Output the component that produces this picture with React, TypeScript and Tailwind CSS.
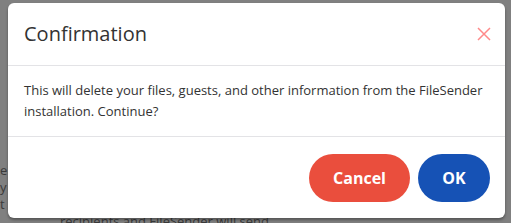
export default function App() {
  return (
    <div className="relative w-[511px] h-[223px] overflow-hidden bg-[#808080] font-['Open_Sans',sans-serif]">
      {/* page content behind the overlay */}
      <div className="pt-[162px] text-[13px] leading-[17px] text-[#3a3a3a]">
        <p>e</p>
        <p>y</p>
        <p>t</p>
        <p className="pl-[60px]">recipients and FileSender will send</p>
      </div>

      <div className="absolute left-[8px] top-[3px] w-[497px] h-[215px] rounded-[6px] bg-white shadow-[0_2px_3px_rgba(0,0,0,0.35)] flex flex-col">
        <div className="h-[63px] flex items-center justify-between pl-[16px] pr-[14px] border-b border-[#e3e3e6]">
          <h2 className="text-[20px] leading-none text-[#333]">Confirmation</h2>
          <button className="w-[14px] h-[14px] text-[#ff8a8a]">
            <svg viewBox="0 0 14 14" width="14" height="14" fill="none" stroke="currentColor" strokeWidth="1.5">
              <path d="M1 1 L13 13 M13 1 L1 13" />
            </svg>
          </button>
        </div>
        <div className="px-[16px] py-[14px] text-[13px] leading-[21px] text-[#333] border-b border-[#e3e3e6]">
          This will delete your files, guests, and other information from the FileSender installation. Continue?
        </div>
        <div className="flex-1 flex items-center justify-end gap-[8px] pr-[15px]">
          <button className="h-[48px] w-[101px] rounded-full bg-[#ea4e3d] text-white font-bold text-[16px]">
            Cancel
          </button>
          <button className="h-[48px] w-[72px] rounded-full bg-[#1652b5] text-white font-bold text-[16px]">
            OK
          </button>
        </div>
      </div>
    </div>
  );
}
